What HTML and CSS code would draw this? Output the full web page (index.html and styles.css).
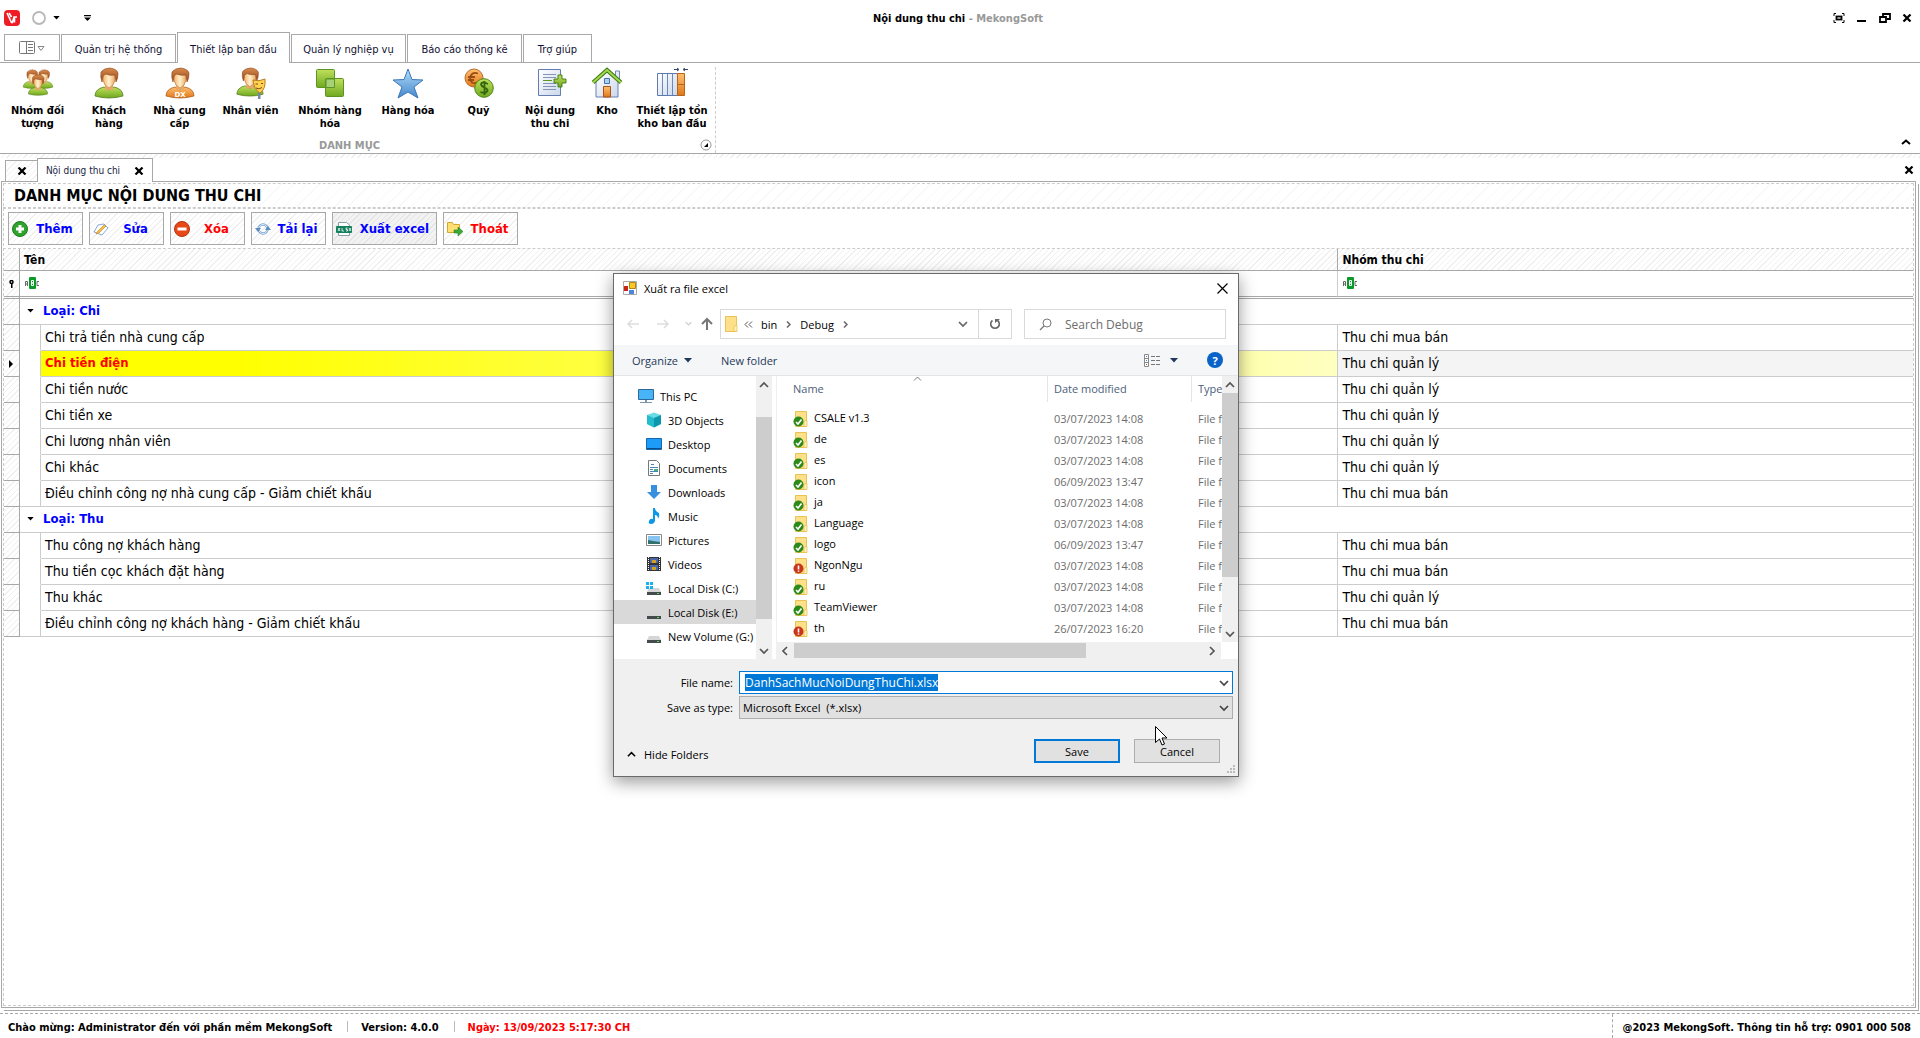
FILE: index.html
```html
<!DOCTYPE html>
<html lang="vi">
<head>
    <meta charset="UTF-8">
    <meta name="viewport" content="width=device-width, initial-scale=1.0">
    <title>Nội dung thu chi - MekongSoft</title>
    <link rel="stylesheet" href="styles.css">
</head>
<body>
    <!-- shared icons -->
    <svg class="defs" width="0" height="0" aria-hidden="true">
        <linearGradient id="gHair" x2="0" y2="1"><stop offset="0" stop-color="#d98a4c"/><stop offset="1" stop-color="#94481c"/></linearGradient>
        <linearGradient id="gFace" x2="1" y2="0"><stop offset="0" stop-color="#f7b469"/><stop offset=".5" stop-color="#fff1cf"/><stop offset="1" stop-color="#eda85c"/></linearGradient>
        <linearGradient id="gGreen" x2="0" y2="1"><stop offset="0" stop-color="#c0e05c"/><stop offset="1" stop-color="#6fa820"/></linearGradient>
        <linearGradient id="gOrange" x2="0" y2="1"><stop offset="0" stop-color="#ffc070"/><stop offset="1" stop-color="#e07818"/></linearGradient>
        <linearGradient id="gBlue" x2="0" y2="1"><stop offset="0" stop-color="#b4dcfa"/><stop offset="1" stop-color="#4488cc"/></linearGradient>
        <linearGradient id="gPaper" x2="1" y2="1"><stop offset="0" stop-color="#fff"/><stop offset="1" stop-color="#ccd8ec"/></linearGradient>
        <symbol id="head" viewBox="0 0 32 32">
            <path d="M12 17h8v6h-8z" fill="#e8a868"/>
            <path d="M10 6Q16 2 22 6v7q-1 6-6 8-5-2-6-8z" fill="url(#gFace)" stroke="#b86c30" stroke-width=".6"/>
            <path d="M9 15Q7 10 8 5 11 1 17 1q7 1 8 5 0 6-2 9l-1-7q-6 1-9-1-2 1-3 2z" fill="url(#gHair)" stroke="#8c461c" stroke-width=".6"/>
        </symbol>
        <symbol id="person" viewBox="0 0 32 32">
            <path d="M2 29q0-7 9-9l5 3 5-3q9 2 9 9-7 2-14 2T2 29z" fill="url(#gGreen)" stroke="#567f18" stroke-width=".8"/>
            <use href="#head"/>
        </symbol>
        <symbol id="folder" viewBox="0 0 16 16">
            <path d="M2.500.5h11v15h-11z" fill="#ffe08a" stroke="#e8c252"/>
            <path d="M12 9.500h2v6h-3v-4z" fill="#fff0bb" stroke="#e8c252" stroke-width=".8"/>
        </symbol>
        <symbol id="f-ok" viewBox="0 0 16 16">
            <use href="#folder"/>
            <circle cx="5.500" cy="10.500" r="5" fill="#2c8b18"/>
            <path d="M3 11l2 2 3.500-4.500" fill="none" stroke="#fff" stroke-width="1.600"/>
        </symbol>
        <symbol id="f-bad" viewBox="0 0 16 16">
            <use href="#folder"/>
            <circle cx="5.500" cy="10.500" r="5" fill="#c8361c"/>
            <path d="M5.500 7.500v4M5.500 12.400v1.400" stroke="#fff" stroke-width="1.600"/>
        </symbol>
        <symbol id="abc" viewBox="0 0 16 12">
            <path d="M1.500 9V4.500h2V9M1.500 7h2M15 4.500h-2v4h2" fill="none" stroke="#666"/>
            <rect x="5" y="0" width="7" height="12" rx="1" fill="#0a9a28"/>
            <path d="M7.500 3.500h2v2.500h-2zM7.500 6h2v2.500h-2z" fill="none" stroke="#fff"/>
        </symbol>
        <symbol id="drive" viewBox="0 0 16 16">
            <path d="M3 8h10l2 4H1z" fill="#d4d6d8"/><path d="M1 12h14v3H1z" fill="#454a4d"/><path d="M11 13h2v1h-2z" fill="#4fe04f"/>
        </symbol>
        <symbol id="x" viewBox="0 0 10 8"><path d="M1.500.5l7 7M8.500.5l-7 7" stroke="#000" stroke-width="2.200"/></symbol>
        <symbol id="tri" viewBox="0 0 8 5"><path d="M0 0h8L4 4.500z" fill="currentColor"/></symbol>
        <symbol id="chev" viewBox="0 0 10 10"><path d="M1 3l4 4 4-4" fill="none" stroke="currentColor" stroke-width="1.700"/></symbol>
    </svg>

    <header class="titlebar">
        <div class="quick">
            <svg width="16" height="16" viewBox="0 0 16 16"><rect width="16" height="16" rx="4" fill="#ee1c25"/><path d="M3 3l4.500 9.500h1L10 7h3M10.500 7v5.500M5 3l2.500 4" fill="none" stroke="#fff" stroke-width="1.600"/></svg>
            <svg class="orb" width="14" height="14" viewBox="0 0 14 14"><circle cx="7" cy="7" r="6" fill="none" stroke="#b8b8b8" stroke-width="1.800"/></svg>
            <svg width="7" height="4"><use href="#tri"/></svg>
            <svg class="more" width="7" height="6" viewBox="0 0 8 7"><path d="M0 0h8v1.500H0zM0 3h8L4 7z"/></svg>
        </div>
        <div class="caption">Nội dung thu chi <span>- MekongSoft</span></div>
        <div class="winbtns">
            <button type="button" aria-label="Toàn màn hình"><svg width="12" height="10" viewBox="0 0 12 10"><path d="M1 3V.5h2M9 .5h2V3M11 7v2.500H9M3 9.500H1V7" fill="none" stroke="#000"/><rect x="3.500" y="3.500" width="5" height="3" fill="none" stroke="#000" stroke-width="1.800"/></svg></button>
            <button type="button" aria-label="Thu nhỏ"><svg width="12" height="10" viewBox="0 0 12 10"><path d="M1 8h9" stroke="#000" stroke-width="2"/></svg></button>
            <button type="button" aria-label="Khôi phục"><svg width="12" height="10" viewBox="0 0 12 10"><path d="M4 4V1h7v5H8M1 4h6v5H1z" fill="none" stroke="#000" stroke-width="1.800"/></svg></button>
            <button type="button" aria-label="Đóng"><svg width="10" height="8"><use href="#x"/></svg></button>
        </div>
    </header>

    <nav class="tabs">
        <button type="button" class="tab file" aria-label="Menu"><svg width="26" height="14" viewBox="0 0 26 14"><rect x=".5" y=".5" width="15" height="12" rx="1" fill="#fff" stroke="#777"/><path d="M7.500 1v11M9 3.500h5M9 6.500h5M9 9.500h5" stroke="#777"/><path d="M19 5.500h6l-3 4z" fill="none" stroke="#888"/></svg></button>
        <button type="button" class="tab">Quản trị hệ thống</button>
        <button type="button" class="tab active">Thiết lập ban đầu</button>
        <button type="button" class="tab">Quản lý nghiệp vụ</button>
        <button type="button" class="tab">Báo cáo thống kê</button>
        <button type="button" class="tab last">Trợ giúp</button>
    </nav>

    <section class="ribbon">
        <div class="group">
            <div class="items">
                <button type="button"><svg width="32" height="32" viewBox="0 0 32 32"><use href="#person" x="0" y="2" width="20" height="20"/><use href="#person" x="12" y="2" width="20" height="20"/><use href="#person" x="5" y="6" width="22" height="24"/></svg>Nhóm đối tượng</button>
                <button type="button"><svg width="32" height="32"><use href="#person"/></svg>Khách hàng</button>
                <button type="button"><svg width="32" height="32" viewBox="0 0 32 32"><path d="M2 29q0-7 9-9l5 3 5-3q9 2 9 9-7 2-14 2T2 29z" fill="url(#gOrange)" stroke="#b0601c" stroke-width=".8"/><use href="#head"/><text x="16" y="30" class="dx">DX</text></svg>Nhà cung cấp</button>
                <button type="button"><svg width="32" height="32" viewBox="0 0 32 32"><use href="#person" x="0" y="0" width="30" height="30"/><path d="M23 24h2.500v8H23z" fill="#7088b0"/><path d="M18 13q6 2 12-1 1 10-5 14-6-3-7-13z" fill="#ffd250" stroke="#b87c1c"/><path d="M20.500 17h2.500M26 16.500h2M21 21q3 2 6-.5" fill="none" stroke="#7c4c14"/></svg>Nhân viên</button>
                <button type="button"><svg width="32" height="32" viewBox="0 0 32 32"><rect x="2.500" y="2.500" width="18" height="18" rx="1" fill="url(#gGreen)" stroke="#5c9424"/><rect x="11.500" y="11.500" width="18" height="18" rx="1" fill="url(#gGreen)" stroke="#5c9424"/><path d="M12 12h8.500v8.500H12z" fill="#a8d078" stroke="#5c9424"/></svg>Nhóm hàng hóa</button>
                <button type="button"><svg width="32" height="32" viewBox="0 0 32 32"><path d="M16 2l4 10.500 11 .5-9 7 4 11-10-6-10 6 4-11-9-7 11-.5z" fill="url(#gBlue)" stroke="#3c78b8"/></svg>Hàng hóa</button>
                <button type="button"><svg width="32" height="32" viewBox="0 0 32 32"><circle cx="11" cy="11" r="9" fill="url(#gOrange)" stroke="#b86c2c"/><path d="M15 6.500q-5-2-7 2t1 7q3 1.500 6-.5M5 10h7M5 13h6" fill="none" stroke="#9c4c14" stroke-width="1.800"/><circle cx="21" cy="21" r="9.300" fill="url(#gGreen)" stroke="#4c8818"/><path d="M25 17q-6-3-7 0 0 2 3.500 3.500t3 3.500q-2 3-7 1M21.500 14v14" fill="none" stroke="#34640c" stroke-width="1.800"/></svg>Quỹ</button>
                <button type="button"><svg width="32" height="32" viewBox="0 0 32 32"><path d="M4.500 2.500h22v26h-22z" fill="url(#gPaper)" stroke="#647cb0"/><path d="M9 7.500h13M9 10.500h13M9 16.500h13M9 19.500h13M9 22.500h13" stroke="#8494b4"/><path d="M9 13.500h9" stroke="#5c9a1c"/><path d="M24 8h4v4h4v4h-4v4h-4v-4h-4v-4h4z" fill="url(#gGreen)" stroke="#3f7c10" stroke-width=".9"/></svg>Nội dung thu chi</button>
                <button type="button"><svg width="32" height="32" viewBox="0 0 32 32"><path d="M24.500 4h4v9h-4z" fill="#e4ecf8" stroke="#7088b8"/><path d="M5 14L16 5l11 9v16H5z" fill="url(#gPaper)" stroke="#6880b0"/><path d="M2 15.500L16 3l14 12.500" fill="none" stroke="#3f7c10" stroke-width="4"/><path d="M2 15.500L16 3l14 12.500" fill="none" stroke="#a4d850" stroke-width="2"/><path d="M13.500 11.500h5v5h-5z" fill="#a8d0f8" stroke="#5070a8"/><path d="M12.500 19.500h7V30h-7z" fill="url(#gOrange)" stroke="#a85418"/></svg>Kho</button>
                <button type="button"><svg width="32" height="32" viewBox="0 0 32 32"><path d="M1.500 6.500h20v22h-20z" fill="url(#gPaper)" stroke="#5c78ac"/><path d="M6.500 7v21M11.500 7v21M16.500 7v21" stroke="#6c88b8"/><path d="M21.500 6.500h7v22h-7zM21.500 17.500h7" fill="url(#gOrange)" stroke="#b8641c"/><path d="M18 2.500h4M21 1l2 1.500L21 4M32 2.500h-4M29 1l-2 1.500L29 4" fill="none" stroke="#34446c"/></svg>Thiết lập tồn kho ban đầu</button>
            </div>
            <div class="group-name">DANH MỤC
                <svg width="12" height="12" viewBox="0 0 12 12"><circle cx="6" cy="6" r="5" fill="#fff" stroke="#999"/><path d="M8 4v4H4z"/></svg>
            </div>
        </div>
        <button type="button" class="collapse" aria-label="Thu gọn"><svg width="10" height="6" viewBox="0 0 10 6"><path d="M1 5l4-3.500L9 5" fill="none" stroke="#000" stroke-width="2"/></svg></button>
    </section>

    <div class="doctabs">
        <button type="button" class="doctab" aria-label="Đóng tab"><svg width="10" height="8"><use href="#x"/></svg></button>
        <button type="button" class="doctab current">Nội dung thu chi <svg width="10" height="8"><use href="#x"/></svg></button>
        <button type="button" class="closeall" aria-label="Đóng tất cả"><svg width="10" height="8"><use href="#x"/></svg></button>
    </div>

    <main class="panel">
        <h1>DANH MỤC NỘI DUNG THU CHI</h1>
        <div class="toolbar">
            <button type="button" class="btn"><svg width="16" height="16" viewBox="0 0 16 16"><circle cx="8" cy="8" r="7.500" fill="#2fa32c" stroke="#187c18"/><path d="M8 4v8M4 8h8" stroke="#fff" stroke-width="3"/></svg><span>Thêm</span></button>
            <button type="button" class="btn"><svg width="16" height="16" viewBox="0 0 16 16"><path d="M5 4l6-1 4 4-6 7-8-3z" fill="#fff" stroke="#88a8d4"/><path d="M4 11L11 4l2 1-7 7-3 1z" fill="#f8c048" stroke="#c08c30" stroke-width=".7"/></svg><span>Sửa</span></button>
            <button type="button" class="btn red"><svg width="16" height="16" viewBox="0 0 16 16"><circle cx="8" cy="8" r="7.500" fill="#e84818" stroke="#b43410"/><path d="M3.500 8h9" stroke="#fff" stroke-width="3"/></svg><span>Xóa</span></button>
            <button type="button" class="btn"><svg width="16" height="16" viewBox="0 0 16 16"><circle cx="8" cy="8" r="4.500" fill="none" stroke="#7ca4d0" stroke-width="2.600"/><circle cx="8" cy="8" r="4.500" fill="none" stroke="#dcecfc"/><path d="M0 7h6L3 11zM10 9h6l-3-4z" fill="#5c8cc0"/></svg><span>Tải lại</span></button>
            <button type="button" class="btn wide"><svg width="16" height="16" viewBox="0 0 16 16"><path d="M2.500 5V1.500h8L13.500 4v1M2.500 12v2.500h11V12" fill="#fff" stroke="#8aa0a8"/><rect y="5" width="16" height="7" rx="1" fill="#12805c"/><path d="M2 7l2 3M4 7l-2 3M6 7v3h2M11.500 7H10v1.500h1.500V10H10M13 7l2 3M15 7l-2 3" fill="none" stroke="#fff" stroke-width=".8"/></svg><span>Xuất excel</span></button>
            <button type="button" class="btn red"><svg width="16" height="16" viewBox="0 0 16 16"><path d="M.5 1.500h5l1 2h6v8H.5z" fill="#ffe070" stroke="#d4a830"/><path d="M7 9h4V6l5 4.500-5 4.500v-3H7z" fill="#3caa38" stroke="#248024" stroke-width=".6"/></svg><span>Thoát</span></button>
        </div>
        <table class="grid">
            <colgroup><col class="c-mark"><col class="c-indent"><col><col class="c-group"></colgroup>
            <thead>
                <tr><th></th><th colspan="2">Tên</th><th>Nhóm thu chi</th></tr>
                <tr class="filter"><td><svg width="5" height="8" viewBox="0 0 5 8"><circle cx="2.500" cy="2" r="1.500" fill="none" stroke="#000" stroke-width="1.500"/><path d="M2 4h1.500v4H2z"/></svg></td><td colspan="2"><svg width="16" height="12"><use href="#abc"/></svg></td><td><svg width="16" height="12"><use href="#abc"/></svg></td></tr>
            </thead>
            <tbody>
                <tr class="head"><td></td><td colspan="3"><svg width="7" height="4"><use href="#tri"/></svg>Loại: Chi</td></tr>
                <tr><td></td><td></td><td>Chi trả tiền nhà cung cấp</td><td>Thu chi mua bán</td></tr>
                <tr class="selected"><td><svg width="4" height="8" viewBox="0 0 4 8"><path d="M0 0l4 4-4 4z"/></svg></td><td></td><td>Chi tiền điện</td><td>Thu chi quản lý</td></tr>
                <tr><td></td><td></td><td>Chi tiền nước</td><td>Thu chi quản lý</td></tr>
                <tr><td></td><td></td><td>Chi tiền xe</td><td>Thu chi quản lý</td></tr>
                <tr><td></td><td></td><td>Chi lương nhân viên</td><td>Thu chi quản lý</td></tr>
                <tr><td></td><td></td><td>Chi khác</td><td>Thu chi quản lý</td></tr>
                <tr class="end"><td></td><td></td><td>Điều chỉnh công nợ nhà cung cấp - Giảm chiết khấu</td><td>Thu chi mua bán</td></tr>
                <tr class="head"><td></td><td colspan="3"><svg width="7" height="4"><use href="#tri"/></svg>Loại: Thu</td></tr>
                <tr><td></td><td></td><td>Thu công nợ khách hàng</td><td>Thu chi mua bán</td></tr>
                <tr><td></td><td></td><td>Thu tiền cọc khách đặt hàng</td><td>Thu chi mua bán</td></tr>
                <tr><td></td><td></td><td>Thu khác</td><td>Thu chi quản lý</td></tr>
                <tr class="end"><td></td><td></td><td>Điều chỉnh công nợ khách hàng - Giảm chiết khấu</td><td>Thu chi mua bán</td></tr>
            </tbody>
        </table>
    </main>

    <footer class="status">
        <div class="status-left">
            <span>Chào mừng: Administrator đến với phần mềm MekongSoft</span>
            <span>Version: 4.0.0</span>
            <span class="red">Ngày: 13/09/2023 5:17:30 CH</span>
        </div>
        <div class="status-right">@2023 MekongSoft. Thông tin hỗ trợ: 0901 000 508</div>
    </footer>

    <!-- save dialog -->
    <div class="dialog" role="dialog" aria-label="Xuất ra file excel">
        <div class="dlg-title">
            <svg width="14" height="14" viewBox="0 0 14 14"><path d="M.5.5h13v13H.5z" fill="#fff" stroke="#aaa"/><path d="M1 5h4v5H1z" fill="#c82818"/><path d="M6.500 1.500h6v6h-6z" fill="#fcc828" stroke="#b08818"/><path d="M6 9h5v4H6z" fill="#4c84e0"/></svg>
            <span>Xuất ra file excel</span>
            <button type="button" aria-label="Close"><svg width="11" height="11" viewBox="0 0 11 11"><path d="M.5.5l10 10M10.500.5l-10 10" stroke="#000" stroke-width="1.200"/></svg></button>
        </div>
        <div class="dlg-nav">
            <svg width="14" height="14" viewBox="0 0 14 14"><path d="M13 7H2M6 3L2 7l4 4" fill="none" stroke="#ddd" stroke-width="1.500"/></svg>
            <svg width="14" height="14" viewBox="0 0 14 14"><path d="M1 7h11M8 3l4 4-4 4" fill="none" stroke="#ddd" stroke-width="1.500"/></svg>
            <svg class="dim" width="7" height="7"><use href="#chev"/></svg>
            <svg width="14" height="14" viewBox="0 0 14 14"><path d="M7 13V2M2 7l5-5 5 5" fill="none" stroke="#777" stroke-width="2"/></svg>
            <div class="address">
                <svg width="16" height="16"><use href="#folder"/></svg>
                <span class="sep"><svg width="9" height="7" viewBox="0 0 9 7"><path d="M4 .5L1 3.500l3 3M8 .5L5 3.500l3 3" fill="none" stroke="#555"/></svg></span>
                <a href="#">bin</a>
                <span class="sep"><svg width="5" height="7" viewBox="0 0 5 7"><path d="M1 .5l3 3-3 3" fill="none" stroke="#666" stroke-width="1.500"/></svg></span>
                <a href="#">Debug</a>
                <span class="sep"><svg width="5" height="7" viewBox="0 0 5 7"><path d="M1 .5l3 3-3 3" fill="none" stroke="#666" stroke-width="1.500"/></svg></span>
                <svg class="drop" width="10" height="10"><use href="#chev"/></svg>
                <button type="button" class="refresh" aria-label="Refresh"><svg width="12" height="12" viewBox="0 0 12 12"><path d="M8.500 2.500a4.300 4.300 0 1 1-5 0" fill="none" stroke="#666" stroke-width="1.600"/><path d="M1 1h5v4z" fill="#666"/></svg></button>
            </div>
            <label class="search"><svg width="13" height="13" viewBox="0 0 13 13"><circle cx="8" cy="5" r="4" fill="none" stroke="#777"/><path d="M5 8l-4 4" stroke="#777" stroke-width="1.300"/></svg><input type="text" placeholder="Search Debug" aria-label="Search Debug"></label>
        </div>
        <div class="dlg-tools">
            <button type="button">Organize <svg width="8" height="5"><use href="#tri"/></svg></button>
            <button type="button">New folder</button>
            <button type="button" class="view" aria-label="View"><svg width="17" height="13" viewBox="0 0 17 13"><path d="M.5.500h4v12h-4zM.5 4.500h4M.5 8.500h4" fill="#fff" stroke="#888"/><path d="M2 2h1v1H2zM2 6h1v1H2z" fill="#2c84e0"/><path d="M2 10h1v1H2z" fill="#d03020"/><path d="M7 2.500h10M7 6.500h10M7 10.500h10" stroke="#777" stroke-dasharray="4 1"/></svg><svg width="8" height="5"><use href="#tri"/></svg></button>
            <button type="button" class="help" aria-label="Help">?</button>
        </div>
        <div class="dlg-body">
            <ul class="tree">
                <li class="root"><svg width="16" height="16" viewBox="0 0 16 16"><path d="M.5 1.500h15v10H.5z" fill="#48b4f8" stroke="#2c6898"/><path d="M7 12h2v2H7zM2 14h12v1H2z" fill="#7c98ac"/></svg><a href="#">This PC</a></li>
                <li><svg width="16" height="16" viewBox="0 0 16 16"><path d="M1 3l7-2.500L15 3v9l-7 3.500L1 12z" fill="#6cdce4"/><path d="M8 6l7-3v9l-7 3.500z" fill="#0c98ac"/><path d="M8 6L1 3v9l7 3.500z" fill="#24bccc"/></svg><a href="#">3D Objects</a></li>
                <li><svg width="16" height="16" viewBox="0 0 16 16"><path d="M.5 2.500h15v11H.5z" fill="#1c9cf8" stroke="#1468b0"/><path d="M1 12.500h14" stroke="#0c4c88"/></svg><a href="#">Desktop</a></li>
                <li><svg width="16" height="16" viewBox="0 0 16 16"><path d="M2.500.5h8l3 3v12h-11z" fill="#fff" stroke="#777"/><path d="M5 4.500h3M4 7.500h8M4 9.500h3M4 11.500h8M4 13.500h3" stroke="#4884b8"/><path d="M8 9h4v2H8z" fill="#48b070"/></svg><a href="#">Documents</a></li>
                <li><svg width="16" height="16" viewBox="0 0 16 16"><path d="M5 1h6v7h4l-7 7-7-7h4z" fill="#388fe0"/></svg><a href="#">Downloads</a></li>
                <li><svg width="16" height="16" viewBox="0 0 16 16"><path d="M7 0h2q0 3 4 5 1 3-1 6 0-4-3-4v6q-1 3-4 3t-2-3 4-2z" fill="#0c98e8"/></svg><a href="#">Music</a></li>
                <li><svg width="16" height="16" viewBox="0 0 16 16"><path d="M.5 2.500h15v11H.5z" fill="#fff" stroke="#888"/><path d="M2 4h12v8H2z" fill="#88c4f0"/><path d="M2 8l5 1 7 1v2H2z" fill="#34706c"/></svg><a href="#">Pictures</a></li>
                <li><svg width="16" height="16" viewBox="0 0 16 16"><path d="M1 1h14v14H1z" fill="#333"/><path d="M2.500 1v14M13.500 1v14" stroke="#fff" stroke-dasharray="1 1"/><path d="M4 2h8v5H4zM4 9h8v5H4z" fill="#4868a8"/><path d="M6 4h4v3H6zM6 11h4v3H6z" fill="#d0a028"/></svg><a href="#">Videos</a></li>
                <li><svg width="16" height="16" viewBox="0 0 16 16"><use href="#drive"/><path d="M0 2h3v3H0zM4 2h3v3H4zM0 6h3v3H0zM4 6h3v3H4z" fill="#1cb0f0"/></svg><a href="#">Local Disk (C:)</a></li>
                <li class="on"><svg width="16" height="16"><use href="#drive"/></svg><a href="#">Local Disk (E:)</a></li>
                <li><svg width="16" height="16"><use href="#drive"/></svg><a href="#">New Volume (G:)</a></li>
            </ul>
            <div class="vscroll tree-scroll"><svg class="up" width="10" height="10"><use href="#chev"/></svg><div class="thumb"></div><svg width="10" height="10"><use href="#chev"/></svg></div>
            <div class="files">
                <div class="files-main">
                    <div class="files-view">
                        <svg class="sort" width="9" height="5" viewBox="0 0 9 5"><path d="M1 4.500l3.500-3.500L8 4.500" fill="none" stroke="#777"/></svg>
                        <table>
                            <colgroup><col class="c-name"><col class="c-date"><col></colgroup>
                            <thead><tr><th>Name</th><th>Date modified</th><th>Type</th></tr></thead>
                            <tbody>
                                <tr><td><svg width="16" height="16"><use href="#f-ok"/></svg>CSALE v1.3</td><td>03/07/2023 14:08</td><td>File folder</td></tr>
                                <tr><td><svg width="16" height="16"><use href="#f-ok"/></svg>de</td><td>03/07/2023 14:08</td><td>File folder</td></tr>
                                <tr><td><svg width="16" height="16"><use href="#f-ok"/></svg>es</td><td>03/07/2023 14:08</td><td>File folder</td></tr>
                                <tr><td><svg width="16" height="16"><use href="#f-ok"/></svg>icon</td><td>06/09/2023 13:47</td><td>File folder</td></tr>
                                <tr><td><svg width="16" height="16"><use href="#f-ok"/></svg>ja</td><td>03/07/2023 14:08</td><td>File folder</td></tr>
                                <tr><td><svg width="16" height="16"><use href="#f-ok"/></svg>Language</td><td>03/07/2023 14:08</td><td>File folder</td></tr>
                                <tr><td><svg width="16" height="16"><use href="#f-ok"/></svg>logo</td><td>06/09/2023 13:47</td><td>File folder</td></tr>
                                <tr><td><svg width="16" height="16"><use href="#f-bad"/></svg>NgonNgu</td><td>03/07/2023 14:08</td><td>File folder</td></tr>
                                <tr><td><svg width="16" height="16"><use href="#f-ok"/></svg>ru</td><td>03/07/2023 14:08</td><td>File folder</td></tr>
                                <tr><td><svg width="16" height="16"><use href="#f-ok"/></svg>TeamViewer</td><td>03/07/2023 14:08</td><td>File folder</td></tr>
                                <tr><td><svg width="16" height="16"><use href="#f-bad"/></svg>th</td><td>26/07/2023 16:20</td><td>File folder</td></tr>
                                <tr><td><svg width="16" height="16"><use href="#folder"/></svg></td><td></td><td></td></tr>
                            </tbody>
                        </table>
                    </div>
                    <div class="vscroll files-scroll"><svg class="up" width="10" height="10"><use href="#chev"/></svg><div class="thumb"></div><svg width="10" height="10"><use href="#chev"/></svg></div>
                </div>
                <div class="hscroll"><svg class="left" width="10" height="10"><use href="#chev"/></svg><div class="thumb"></div><svg class="right" width="10" height="10"><use href="#chev"/></svg></div>
            </div>
        </div>
        <form class="dlg-form">
            <label for="filename">File name:</label>
            <div class="field"><input type="text" id="filename" value="DanhSachMucNoiDungThuChi.xlsx"><svg width="10" height="10"><use href="#chev"/></svg></div>
            <label for="filetype">Save as type:</label>
            <div class="field"><select id="filetype"><option>Microsoft Excel&nbsp; (*.xlsx)</option></select><svg width="10" height="10"><use href="#chev"/></svg></div>
        </form>
        <div class="dlg-foot">
            <button type="button" class="hide"><svg class="up" width="9" height="9"><use href="#chev"/></svg>Hide Folders</button>
            <button type="button" class="push primary">Save</button>
            <button type="button" class="push">Cancel</button>
        </div>
        <svg class="grip" width="8" height="8" viewBox="0 0 8 8"><path d="M6 0h2v2H6zM3 3h2v2H3zM6 3h2v2H6zM0 6h2v2H0zM3 6h2v2H3zM6 6h2v2H6z" fill="#bbb"/></svg>
        <svg class="cursor" width="13" height="20" viewBox="0 0 13 20"><path d="M.5.500v16l4-3.500 2.500 6 2.500-1-2.500-6h5z" fill="#fff" stroke="#000"/></svg>
    </div>

    <script>
        const filename = document.getElementById('filename');
        filename.focus();
        filename.select();
    </script>
</body>
</html>
```
FILE: styles.css
```css
* {
    box-sizing: border-box;
}
body {
    margin: 0;
    height: 100vh;
    display: flex;
    flex-direction: column;
    overflow: hidden;
    background: #fff;
    color: #000;
    font-family: "DejaVu Sans Condensed", "Noto Sans", sans-serif;
    font-size: 11px;
}
button {
    border: 0;
    padding: 0;
    background: none;
    color: inherit;
    font: inherit;
}
svg {
    flex: none;
    display: block;
}
.defs {
    position: absolute;
}
.red {
    color: #f00;
}

/* title bar */
.titlebar {
    height: 32px;
    display: grid;
    grid-template-columns: 1fr auto 1fr;
    align-items: center;
    padding: 4px 8px 0 4px;
}
.quick {
    display: flex;
    align-items: center;
}
.orb {
    margin: 0 7px 0 12px;
}
.more {
    margin-left: 24px;
}
.caption {
    font-weight: bold;
}
.caption span {
    color: #999;
}
.winbtns {
    display: flex;
    justify-content: flex-end;
    gap: 11px;
}

/* ribbon tabs */
.tabs {
    height: 31px;
    display: flex;
    align-items: flex-end;
    gap: 1px;
    padding-left: 4px;
    border-bottom: 1px solid #a8a8a8;
}
.tab {
    width: 115px;
    height: 28px;
    padding-top: 2px;
    border: 1px solid #a8a8a8;
    border-bottom: 0;
    color: #113;
}
.tab.file {
    width: 56px;
    height: 27px;
    padding: 0;
    margin-bottom: 1px;
    border-bottom: 1px solid #a8a8a8;
    display: flex;
    align-items: center;
    justify-content: center;
}
.tab.active {
    width: 113px;
    height: 31px;
    margin-bottom: -1px;
    background: #fff;
}
.tab.last {
    width: 69px;
}

.ribbon {
    height: 91px;
    display: flex;
    justify-content: space-between;
    align-items: flex-end;
    border-bottom: 1px solid #a8a8a8;
}
.group {
    height: 86px;
    padding-left: 1px;
    border-right: 1px dashed #ccc;
}
.items {
    display: grid;
    grid-template-columns: 73px 70px 71px 71px 88px 68px 73px 70px 44px 86px;
    height: 70px;
}
.items button {
    display: flex;
    flex-direction: column;
    align-items: center;
    justify-content: flex-start;
    padding: 0 6px;
    font-weight: bold;
    line-height: 13px;
}
.items svg {
    margin-bottom: 5px;
    overflow: visible;
}
.items button:last-child {
    padding: 0;
}
.dx {
    font: bold 7px "DejaVu Sans", sans-serif;
    fill: #fff;
    text-anchor: middle;
}
.group-name {
    display: flex;
    align-items: center;
    justify-content: flex-end;
    height: 16px;
    padding-right: 3px;
    gap: 320px;
    color: #999;
    font-weight: bold;
}
.collapse {
    margin: 0 9px 8px 0;
}

/* document tabs */
.doctabs {
    height: 27px;
    display: flex;
    align-items: flex-end;
    padding-left: 5px;
    background: repeating-linear-gradient(135deg, #fff 0 3px, #eee 3px 4px) top / 100% 4px no-repeat;
}
.doctab {
    width: 32px;
    height: 21px;
    border: 1px solid #a8a8a8;
    border-width: 1px 0 0 1px;
    display: flex;
    align-items: center;
    justify-content: center;
    background: repeating-linear-gradient(135deg, #fff 0 3px, #f2f2f2 3px 4px);
}
.doctab.current {
    width: 116px;
    height: 24px;
    margin-bottom: -1px;
    border-width: 1px 1px 0 1px;
    gap: 14px;
    background: #fff;
    color: #224;
    font-size: 10px;
    position: relative;
}
.closeall {
    margin: 0 6px 7px auto;
}

/* content */
.panel {
    flex: 1;
    min-height: 0;
    margin: 0 4px 5px 1px;
    border: 1px solid #a8a8a8;
    box-shadow: 2px 2px 0 #fff, 3px 3px 0 #a8a8a8;
    padding: 1px;
    outline: 1px dashed #ccc;
    outline-offset: -3px;
}
h1 {
    margin: 0;
    height: 25px;
    padding-left: 11px;
    border-bottom: 1px dashed #ccc;
    font-size: 16px;
    line-height: 26px;
    background: repeating-linear-gradient(135deg, #fff 0 8px, #f8f8f8 8px 9px);
}
.toolbar {
    display: flex;
    gap: 6px;
    height: 41px;
    padding: 3px 5px 0;
    border-top: 1px dashed #ccc;
    border-bottom: 1px dashed #ccc;
}
.btn {
    width: 75px;
    height: 33px;
    display: flex;
    align-items: center;
    padding: 0 1px 0 3px;
    border: 1px solid #a8a8a8;
    background: repeating-linear-gradient(135deg, #fff 0 3px, #f0f0f0 3px 4px);
    color: #00f;
    font-size: 13px;
    font-weight: bold;
}
.btn.red {
    color: #f00;
}
.btn.wide {
    width: 105px;
    padding-right: 7px;
    background: repeating-linear-gradient(135deg, #f2f2f2 0 3px, #e4e4e4 3px 4px);
}
.btn span {
    flex: 1;
    text-align: center;
    white-space: nowrap;
}
.btn.wide span {
    text-align: right;
}

.grid {
    width: calc(100% - 2px);
    margin-left: 1px;
    table-layout: fixed;
    border-collapse: separate;
    border-spacing: 0;
    font-size: 14px;
}
.c-mark {
    width: 16px;
}
.c-indent {
    width: 21px;
}
.c-group {
    width: 30.1%;
}
.grid th {
    height: 22px;
    padding: 0 4px;
    border-right: 1px solid #a8a8a8;
    border-bottom: 1px solid #a8a8a8;
    text-align: left;
    font-size: 12px;
    background: repeating-linear-gradient(135deg, #fff 0 3px, #f0f0f0 3px 4px);
}
.grid td {
    height: 26px;
    padding: 0 4px 1px;
    line-height: 18px;
    border-right: 1px solid #ccc;
    border-bottom: 1px solid #ccc;
    white-space: nowrap;
}
.grid th:last-child,
.grid td:last-child {
    border-right: 0;
}
.grid td:first-child {
    padding: 0 0 0 5px;
    border-color: #a8a8a8;
    background: repeating-linear-gradient(135deg, #fff 0 3px, #f0f0f0 3px 4px);
}
.grid .filter td {
    height: 28px;
    border-bottom: 3px double #a8a8a8;
}
.grid td:nth-child(2):empty {
    border-bottom-color: transparent;
}
.grid .end td:nth-child(2):empty {
    border-bottom-color: #ccc;
}
.grid .head td {
    color: #00f;
    font-size: 13px;
    font-weight: bold;
}
.grid .head svg {
    display: inline-block;
    margin: 0 9px 2px 3px;
    color: #000;
}
.grid .selected td:nth-child(3) {
    background: linear-gradient(90deg, #ff0 15%, #ffffc0);
    color: #f00;
    font-size: 13px;
    font-weight: bold;
}
.grid .selected td:nth-child(4) {
    background: #f4f4f4;
}

.status {
    height: 25px;
    display: flex;
    justify-content: space-between;
    border-top: 1px dashed #a8a8a8;
    font-weight: bold;
    line-height: 28px;
}
.status-left {
    display: flex;
    padding-left: 8px;
}
.status-left span + span::before {
    content: "";
    display: inline-block;
    height: 11px;
    margin: 0 13px -1px 15px;
    border-left: 1px solid #bbb;
}
.status-right {
    padding: 0 9px 0 10px;
    border-left: 1px dashed #a8a8a8;
}

/* save dialog */
.dialog {
    position: absolute;
    left: 613px;
    top: 273px;
    width: 626px;
    border: 1px solid #6a6a6a;
    background: #f0f0f0;
    box-shadow: 0 5px 16px rgba(0, 0, 0, 0.4);
    font-family: "Open Sans", "Noto Sans", sans-serif;
    font-size: 12px;
}
.dialog a {
    color: inherit;
    text-decoration: none;
}
.dlg-title {
    height: 35px;
    display: flex;
    align-items: center;
    gap: 7px;
    padding: 0 10px 7px 9px;
    background: #fff;
    font-size: 11px;
}
.dlg-title button {
    margin-left: auto;
}
.dlg-nav {
    height: 36px;
    display: flex;
    align-items: flex-start;
    padding: 0 12px 0 12px;
    background: #fff;
}
.dlg-nav > svg {
    margin: 8px 16px 0 0;
}
.dlg-nav > .dim {
    margin: 11px 8px 0 -1px;
    color: #ccc;
}
.dlg-nav > svg:nth-child(4) {
    margin-right: 6px;
}
.address {
    flex: 1;
    height: 30px;
    display: flex;
    align-items: center;
    border: 1px solid #d9d9d9;
    padding-left: 2px;
    font-size: 11px;
}
.sep {
    margin: 0 9px;
}
.address .sep:nth-child(2) {
    margin: 0 8px 0 5px;
}
.drop {
    margin: 0 10px 0 auto;
    color: #666;
}
.refresh {
    width: 33px;
    height: 28px;
    display: flex;
    align-items: center;
    justify-content: center;
    border-left: 1px solid #d9d9d9;
}
.refresh svg {
    transform: scaleX(-1);
}
.search {
    width: 202px;
    height: 30px;
    margin-left: 12px;
    padding-left: 14px;
    display: flex;
    align-items: center;
    gap: 13px;
    border: 1px solid #d9d9d9;
}
.search input {
    width: 140px;
    border: 0;
    padding: 0;
    font: inherit;
}
.search input::placeholder {
    color: #6d6d6d;
}
.dlg-tools {
    height: 31px;
    display: flex;
    align-items: center;
    gap: 29px;
    padding: 0 15px 0 18px;
    background: #f5f6f7;
    border-bottom: 1px solid #e5e5e5;
    color: #1e395b;
    font-size: 11px;
}
.dlg-tools button {
    display: flex;
    align-items: center;
    gap: 6px;
}
.dlg-tools .view {
    margin-left: auto;
    gap: 9px;
}
.dlg-tools .help {
    width: 16px;
    height: 16px;
    border-radius: 8px;
    background: #0a64c8;
    color: #fff;
    font-weight: bold;
    justify-content: center;
}
.dlg-body {
    height: 283px;
    display: flex;
    background: #fff;
}
.tree {
    width: 142px;
    margin: 0;
    padding: 8px 0 0;
    list-style: none;
    overflow: hidden;
    font-size: 11px;
}
.tree li {
    height: 24px;
    display: flex;
    align-items: center;
    gap: 6px;
    padding-left: 32px;
    white-space: nowrap;
}
.tree .root {
    padding-left: 24px;
}
.tree .on {
    background: #d9d9d9;
}
.vscroll {
    width: 16px;
    display: flex;
    flex-direction: column;
    align-items: center;
    background: #f0f0f0;
    color: #555;
}
.vscroll svg {
    margin: 4px 0 3px;
}
.up {
    transform: rotate(180deg);
}
.vscroll .thumb {
    width: 100%;
    background: #cdcdcd;
}
.vscroll svg:last-child {
    margin-top: auto;
}
.tree-scroll .thumb {
    height: 202px;
    margin-top: 24px;
}
.files-scroll .thumb {
    height: 184px;
}
.files {
    flex: 1;
    min-width: 0;
    display: flex;
    flex-direction: column;
    margin-left: 4px;
    border-left: 1px solid #f0f0f0;
}
.files-main {
    flex: 1;
    min-height: 0;
    display: flex;
}
.files-view {
    flex: 1;
    min-width: 0;
    overflow: hidden;
    position: relative;
}
.sort {
    position: absolute;
    left: 136px;
    top: 0;
}
.files-view table {
    width: 100%;
    table-layout: fixed;
    border-collapse: separate;
    border-spacing: 0;
    font-size: 11px;
    line-height: 14px;
    white-space: nowrap;
}
.c-name {
    width: 271px;
}
.c-date {
    width: 144px;
}
.files-view th {
    height: 26px;
    padding: 0 0 0 6px;
    border-right: 1px solid #e5e5e5;
    color: #4c607a;
    font-weight: normal;
    text-align: left;
}
.files-view th:first-child {
    padding-left: 16px;
}
.files-view th:last-child {
    border-right: 0;
}
.files-view tbody::before {
    content: "";
    display: block;
    height: 6px;
}
.files-view td {
    height: 21px;
    padding: 0 0 0 6px;
    color: #6d6d6d;
}
.files-view td:first-child {
    padding-left: 16px;
    color: #000;
}
.files-view td svg {
    float: left;
    margin-right: 5px;
}
.hscroll {
    height: 17px;
    margin-right: 17px;
    display: flex;
    align-items: center;
    background: #f0f0f0;
    color: #555;
}
.hscroll svg {
    margin: 0 4px 0 3px;
}
.left {
    transform: rotate(90deg);
}
.right {
    transform: rotate(-90deg);
}
.hscroll .thumb {
    width: 292px;
    height: 15px;
    background: #cdcdcd;
}
.hscroll .right {
    margin-left: auto;
}
.dlg-form {
    display: grid;
    grid-template-columns: 119px 1fr;
    gap: 2px 6px;
    align-items: center;
    padding: 12px 5px 0 0;
    font-size: 11px;
}
.dlg-form label {
    text-align: right;
}
.field {
    position: relative;
    display: flex;
    color: #444;
}
.field svg {
    position: absolute;
    right: 4px;
    top: 7px;
}
.field input,
.field select {
    width: 100%;
    height: 23px;
    padding: 0 20px 0 5px;
    border: 1px solid #0078d7;
    border-radius: 0;
    outline: 0;
    background: #fff;
    color: #000;
    font: inherit;
    font-size: 12px;
    appearance: none;
}
.field select {
    padding-left: 3px;
    border-color: #adadad;
    background: #e1e1e1;
    font-size: 11px;
}
.field input::selection {
    background: #0078d7;
    color: #fff;
}
.dlg-foot {
    display: flex;
    align-items: center;
    gap: 14px;
    padding: 20px 18px 13px 13px;
    font-size: 11px;
}
.hide {
    display: flex;
    align-items: center;
    gap: 8px;
    margin: 6px auto 0 0;
}
.push {
    width: 86px;
    height: 24px;
    border: 1px solid #adadad;
    background: #e1e1e1;
}
.push.primary {
    border: 2px solid #0078d7;
}
.grip {
    position: absolute;
    right: 3px;
    bottom: 3px;
}
.cursor {
    position: absolute;
    left: 541px;
    top: 452px;
}
```
